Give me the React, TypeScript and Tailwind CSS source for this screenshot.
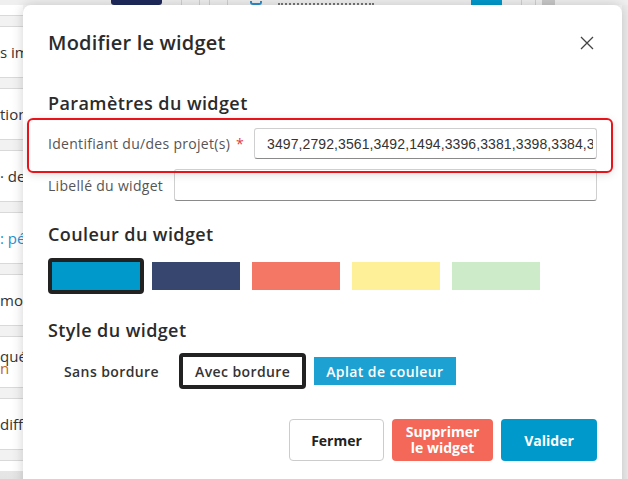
import { useState } from "react";

const swatches = ["#0099cc", "#36466e", "#f47665", "#fdf098", "#cdebc8"];

const rows = [
  { text: "s importants", color: "text-[#333]" },
  { text: "tion", color: "text-[#333]" },
  { text: "· des", color: "text-[#333]" },
  { text: ": pé", color: "text-[#2a8fcf]" },
  { text: "modifications", color: "text-[#333]" },
  { text: "qué", color: "text-[#333]", sub: "n" },
  { text: "diffusion", color: "text-[#333]" },
];

function Background() {
  return (
    <div className="absolute inset-0 bg-[#f6f6f6]">
      {/* top bar, scrolled, only its bottom edge shows */}
      <div className="flex h-[5px] items-end overflow-hidden bg-[#efefef]">
        <div className="ml-[111px] h-[5px] w-[51px] rounded-b-[3px] bg-[#1f2a5c]" />
        <div className="ml-[19px] h-[5px] w-px bg-[#d0d0d0]" />
        <div className="ml-[17px] h-[5px] w-px bg-[#d0d0d0]" />
        <div className="ml-[9px] h-[5px] w-px bg-[#d0d0d0]" />
        <div className="ml-[17px] h-[5px] w-px bg-[#d0d0d0]" />
        <div className="ml-[22px] h-[4px] w-[12px] rounded-b-[3px] border-x-2 border-b-2 border-[#2a8fcf]" />
        <div className="ml-[16px] h-[5px] w-[96px] border-b-2 border-dotted border-[#777]" />
        <div className="ml-[97px] h-[5px] w-[31px] bg-[#0099cc]" />
        <div className="ml-[19px] h-[5px] w-px bg-[#d0d0d0]" />
        <div className="ml-[13px] h-[5px] w-px bg-[#d0d0d0]" />
        <div className="ml-[6px] h-[5px] w-[13px] bg-[#c8c8c8]" />
      </div>

      {/* left list, mostly hidden under the modal */}
      <div className="w-[23px] overflow-hidden bg-white" style={{ fontFamily: "'Open Sans', sans-serif" }}>
        <div className="h-[10px]" />
        {rows.map((r, i) => (
          <div key={i}>
            <div className="h-[12px] border-y border-[#d9d9d9] bg-[#f2f2f2]" />
            <div className="flex h-[50px] flex-col justify-center whitespace-nowrap text-[15px] leading-[12px]">
              <span className={r.color}>{r.text}</span>
              {r.sub && <span className="text-[#c0661a]">{r.sub}</span>}
            </div>
          </div>
        ))}
        <div className="h-[12px] border-y border-[#d9d9d9] bg-[#f2f2f2]" />
        <div className="h-[10px] bg-white" />
      </div>
      <div className="h-[40px] bg-gradient-to-b from-[#e6e6e6] to-[#dcdcdc]" />

      {/* right page edge */}
      <div className="absolute right-0 top-[5px] h-[474px] w-[6px] bg-[#ececec]" />
    </div>
  );
}

function Modal() {
  const [color, setColor] = useState(0);
  const [style, setStyle] = useState(1);
  const styles = ["Sans bordure", "Avec bordure", "Aplat de couleur"];

  return (
    <div
      className="absolute left-[23px] top-[5px] h-[500px] w-[599px] rounded-[8px] bg-white px-[25px] pt-[24px] shadow-[0_0_12px_rgba(0,0,0,0.18)]"
      style={{ fontFamily: "'Open Sans', 'Liberation Sans', sans-serif" }}
    >
      <div className="flex items-center justify-between">
        <h2 className="text-[20px] font-semibold leading-[28px] tracking-[0.2px] text-[#2b2b2b]">Modifier le widget</h2>
        <button className="mr-[3px] text-[#444]" aria-label="Fermer">
          <svg width="14" height="14" viewBox="0 0 14 14" fill="none" stroke="currentColor" strokeWidth="1.3">
            <path d="M1 1l12 12M13 1L1 13" />
          </svg>
        </button>
      </div>

      <h3 className="mt-[33px] text-[18px] font-semibold leading-[26px] tracking-[0.4px] text-[#2b2b2b]">
        Paramètres du widget
      </h3>

      <div className="relative mt-[12px] flex items-center">
        <label className="w-[206px] text-[14px] tracking-[0.3px] text-[#555]">
          Identifiant du/des projet(s) <span className="ml-[2px] text-[#e23b3b]">*</span>
        </label>
        <input
          className="h-[31px] flex-1 rounded-[3px] border border-[#cfcfcf] border-b-[#8a8a8a] pl-[12px] pr-[3px] text-[14px] tracking-[0.1px] text-[#333] outline-none"
          style={{ fontFamily: "'Liberation Sans', sans-serif" }}
          defaultValue="3497,2792,3561,3492,1494,3396,3381,3398,3384,3385"
        />
        <span className="pointer-events-none absolute -bottom-[14px] -left-[21px] -right-[16px] -top-[10px] z-10 rounded-[6px] border-2 border-[#e8141a] shadow-[0_2px_8px_rgba(0,0,0,0.12)]" />
      </div>

      <div className="mt-[10px] flex items-center">
        <label className="w-[126px] text-[14px] tracking-[0.3px] text-[#555]">Libellé du widget</label>
        <input className="h-[32px] flex-1 rounded-[3px] border border-[#cfcfcf] border-b-[#8a8a8a] px-[12px] text-[14px] outline-none" />
      </div>

      <h3 className="mt-[20px] text-[18px] font-semibold leading-[26px] tracking-[0.4px] text-[#2b2b2b]">
        Couleur du widget
      </h3>
      <div className="mt-[11px] flex gap-[4px]">
        {swatches.map((c, i) => (
          <button
            key={c}
            onClick={() => setColor(i)}
            className={
              "h-[36px] w-[96px] rounded-[4px] border-4 bg-clip-padding " +
              (color === i ? "border-[#222]" : "border-transparent")
            }
            style={{ backgroundColor: c }}
          />
        ))}
      </div>

      <h3 className="mt-[23px] text-[18px] font-semibold leading-[26px] tracking-[0.4px] text-[#2b2b2b]">
        Style du widget
      </h3>
      <div className="mt-[10px] flex gap-[4px]">
        {styles.map((s, i) => (
          <button
            key={s}
            onClick={() => setStyle(i)}
            className={
              "h-[36px] rounded-[4px] border-4 px-[12px] text-[14px] font-semibold tracking-[0.4px] " +
              (i === 2
                ? "border-transparent bg-[#1da1d2] bg-clip-padding text-white "
                : "text-[#333] ") +
              (style === i ? "border-[#222]" : i === 2 ? "" : "border-transparent")
            }
          >
            {s}
          </button>
        ))}
      </div>

      <div className="mt-[30px] flex justify-end gap-[8px]">
        <button className="h-[42px] w-[95px] rounded-[4px] border border-[#cccccc] bg-white text-[14px] font-bold text-[#222]">
          Fermer
        </button>
        <button className="h-[42px] w-[101px] rounded-[4px] bg-[#f36859] text-[14px] font-bold leading-[16px] text-white">
          Supprimer
          <br />
          le widget
        </button>
        <button className="h-[42px] w-[96px] rounded-[4px] bg-[#0099cc] text-[14px] font-bold text-white">
          Valider
        </button>
      </div>
    </div>
  );
}

export default function App() {
  return (
    <div className="relative h-[479px] w-[628px] overflow-hidden">
      <Background />
      <Modal />
    </div>
  );
}
